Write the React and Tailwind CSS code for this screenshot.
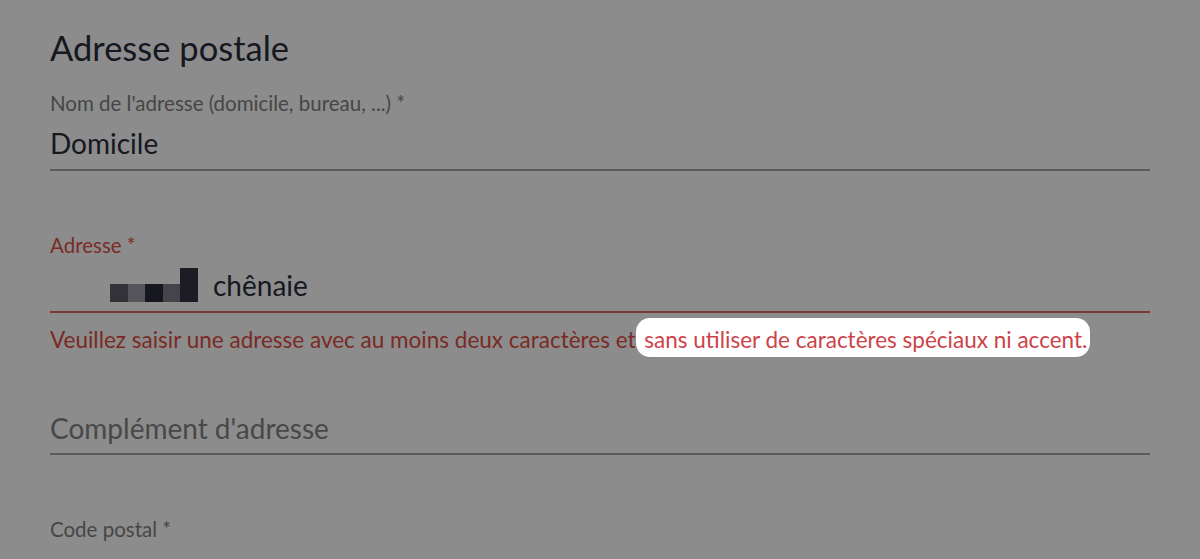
import React from 'react';

function Label({ children, error }) {
  return (
    <div className={`text-[20.5px] leading-[24px] ${error ? 'text-[#7a2c26]' : 'text-[#464646]'}`}>
      {children}
    </div>
  );
}

function Redacted() {
  // pixelated blur over the street number
  return (
    <div className="flex items-end h-[34px] ml-[60px] mr-[15px]">
      <div className="w-[18px] h-[18px] bg-[#323238]"></div>
      <div className="w-[17px] h-[18px] bg-[#55555b]"></div>
      <div className="w-[18px] h-[18px] bg-[#17181f]"></div>
      <div className="w-[17px] h-[18px] bg-[#44444a]"></div>
      <div className="w-[18px] h-[34px] bg-[#1b1c24]"></div>
    </div>
  );
}

export default function App() {
  return (
    <div className="w-full h-[559px] overflow-hidden bg-[#8c8c8c] px-[50px] pt-[28px] font-['Lato','Liberation_Sans',sans-serif]">
      <h2 className="text-[34.5px] leading-[40px] text-[#16181f]">Adresse postale</h2>

      {/* Nom de l'adresse */}
      <div className="mt-[23px]">
        <Label>Nom de l'adresse (domicile, bureau, ...) *</Label>
        <div className="mt-[11px] pb-[9px] border-b-2 border-[#5b5b5b] text-[28px] leading-[34px] text-[#16181f]">
          Domicile
        </div>
      </div>

      {/* Adresse */}
      <div className="mt-[62px]">
        <Label error>Adresse *</Label>
        <div className="mt-[11px] pb-[9px] border-b-2 border-[#7a3a31] flex items-end">
          <Redacted />
          <span className="text-[28px] leading-[34px] text-[#16181f]">chênaie</span>
        </div>
        <p className="mt-[13px] text-[22.5px] leading-[28px] text-[#7a2a24] whitespace-nowrap">
          Veuillez saisir une adresse avec au moins deux caractères et
          <span className="bg-white text-[#cc4349] rounded-[14px] pt-[8px] pb-[4px] pl-[3px] pr-[3px]"> sans utiliser de caractères spéciaux ni accent.</span>
        </p>
      </div>

      {/* Complément */}
      <div className="mt-[57px] pb-[8px] border-b-2 border-[#5b5b5b] text-[28px] leading-[34px] text-[#484848]">
        Complément d'adresse
      </div>

      {/* Code postal */}
      <div className="mt-[62px]">
        <Label>Code postal *</Label>
        <div className="mt-[11px] text-[28px] leading-[34px] text-[#16181f]">34310</div>
      </div>
    </div>
  );
}
